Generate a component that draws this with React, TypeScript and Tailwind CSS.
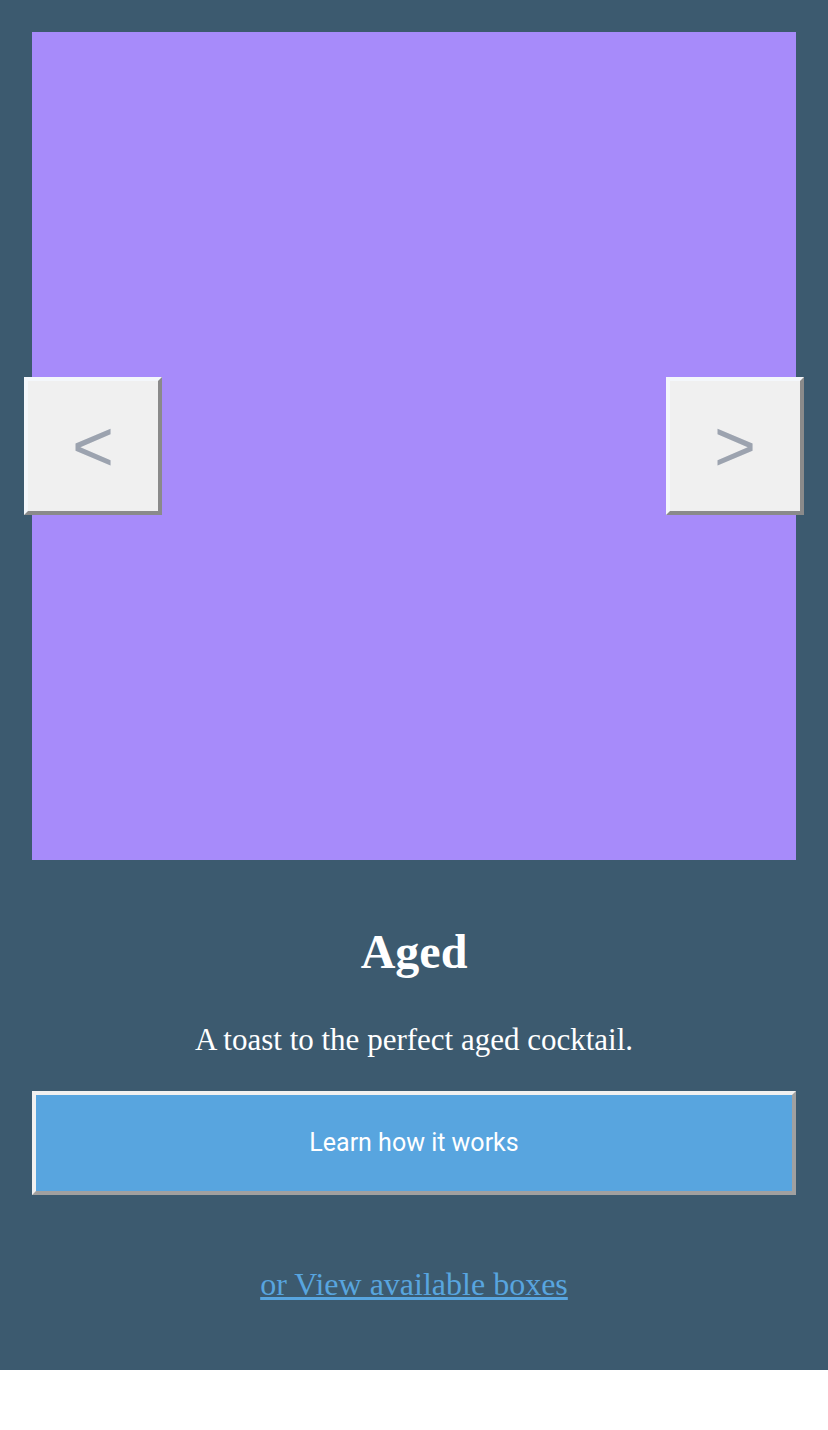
import { useState } from "react"

const slides = [
  { name: "Aged", blurb: "A toast to the perfect aged cocktail.", color: "bg-[#a78bfa]" },
]

export default function App() {
  const [index, setIndex] = useState(0)
  const slide = slides[index]

  const prev = () => setIndex((index - 1 + slides.length) % slides.length)
  const next = () => setIndex((index + 1) % slides.length)

  return (
    <div className="bg-[#3c5a6f] px-8 pt-8 pb-[70px]">
      {/* Carrossel */}
      <div className={`relative h-[828px] ${slide.color}`}>
        <button
          onClick={prev}
          className="absolute left-[-8px] top-1/2 flex h-[138px] w-[138px] -translate-y-1/2 items-center justify-center border-4 border-solid border-t-[#f4f7fb] border-l-[#f4f7fb] border-r-[#8a8a8a] border-b-[#8a8a8a] bg-[#f0f0f0] font-['Liberation_Sans',sans-serif] text-[72px] leading-none text-[#9ca3af]"
        >
          &lt;
        </button>
        <button
          onClick={next}
          className="absolute right-[-8px] top-1/2 flex h-[138px] w-[138px] -translate-y-1/2 items-center justify-center border-4 border-solid border-t-[#f4f7fb] border-l-[#f4f7fb] border-r-[#8a8a8a] border-b-[#8a8a8a] bg-[#f0f0f0] font-['Liberation_Sans',sans-serif] text-[72px] leading-none text-[#9ca3af]"
        >
          &gt;
        </button>
      </div>

      {/* Texto */}
      <h2 className="mt-[68px] text-center font-['Liberation_Serif',serif] text-5xl leading-[48px] font-bold text-white">
        {slide.name}
      </h2>
      <p className="mt-12 text-center font-['Liberation_Serif',serif] text-[31px] leading-[31px] text-white">
        {slide.blurb}
      </p>

      <button className="mt-9 flex h-[104px] w-full items-center justify-center border-4 border-solid border-t-[#f0f0f0] border-l-[#f0f0f0] border-r-[#a0a0a0] border-b-[#a0a0a0] bg-[#58a5df] font-['Roboto',sans-serif] text-[25px] text-white">
        Learn how it works
      </button>

      <div className="mt-[73px] text-center font-['Liberation_Serif',serif] text-[32px] leading-8">
        <a href="#" className="text-[#58a5df] underline">
          or View available boxes
        </a>
      </div>
    </div>
  )
}
